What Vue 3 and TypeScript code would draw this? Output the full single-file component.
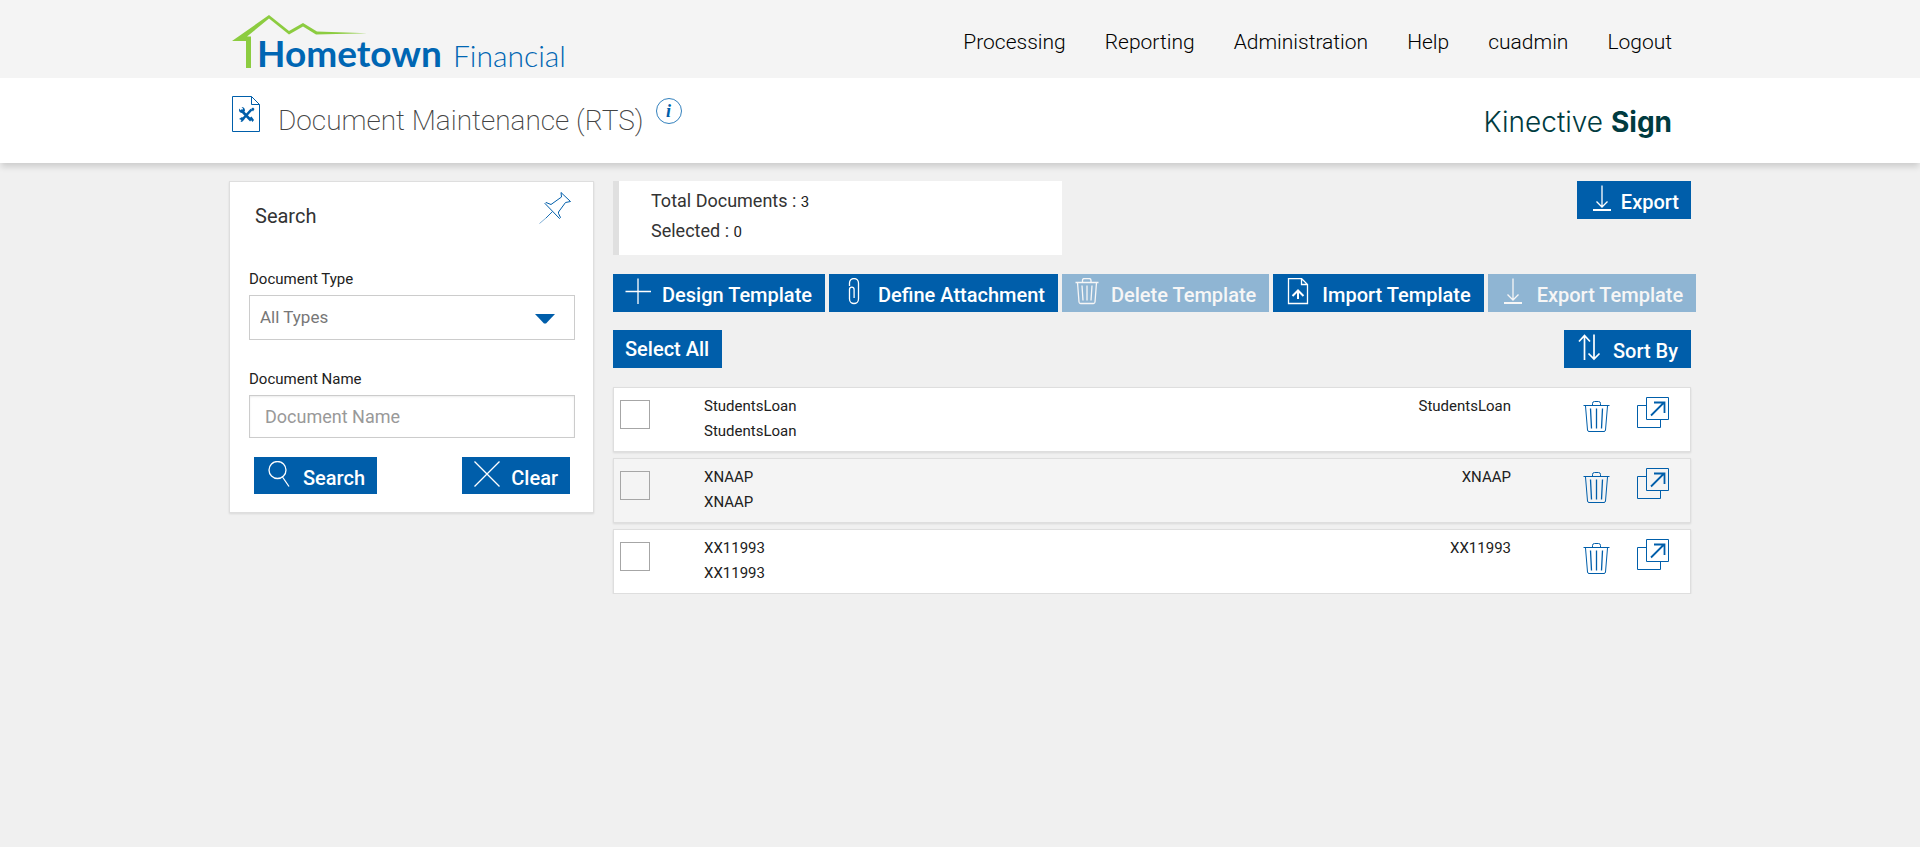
<script setup lang="ts">
import { ref } from 'vue'

interface DocumentRow {
  id: number
  name: string
  description: string
  template: string
}

interface ToolbarAction {
  label: string
  icon: IconName
  disabled: boolean
}

type IconName = 'plus' | 'clip' | 'trash' | 'import' | 'download' | 'sort' | 'search' | 'close'

const icons: Record<IconName, string> = {
  plus: 'M13 0.5V26 M0.5 13.5H26',
  clip: 'M8.500 8V5a4.500 4.500 0 0 1 9 0V21a4.500 4.500 0 0 1-9 0V11.500a2.300 2.300 0 0 1 4.600 0V20',
  trash: 'M1.500 4.500H24.500 M8.500 4V2.500Q8.500 0.500 10.500 0.500H15Q17 0.500 17 2.500V4 M3.500 4.500L5 24Q5.200 25.500 6.500 25.500H19.500Q20.800 25.500 21 24L22.500 4.500 M8 7.500L9 22.500 M13 7.500V22.500 M18 7.500L17 22.500',
  import: 'M3.500 0.500H16.500L22.500 6.500V25.500H3.500Z M16.500 0.500V6.500H22.500',
  download: 'M13 0.500V22 M7.500 16.500L13 22L18.500 16.500',
  sort: 'M8.500 26V1.500 M3 7.500L8.500 1.500L14 7.500 M18 0.500V25 M12.500 19.500L18 25L23.500 19.500',
  search: 'M11.500 17.500A8.500 8.500 0 1 0 11.500 0.500A8.500 8.500 0 0 0 11.500 17.500Z M16.500 16L23 25.500',
  close: 'M0.500 0.500L25.500 25.500 M25.500 0.500L0.500 25.500',
}

const heavyStrokes: Partial<Record<IconName, string>> = {
  import: 'M13 21V13 M7.500 18L13 12.500L18.500 18',
  download: 'M4 25H22',
}

const navigation = ['Processing', 'Reporting', 'Administration', 'Help', 'cuadmin', 'Logout']

const actions: ToolbarAction[] = [
  { label: 'Design Template', icon: 'plus', disabled: false },
  { label: 'Define Attachment', icon: 'clip', disabled: false },
  { label: 'Delete Template', icon: 'trash', disabled: true },
  { label: 'Import Template', icon: 'import', disabled: false },
  { label: 'Export Template', icon: 'download', disabled: true },
]

const documents: DocumentRow[] = [
  { id: 1, name: 'StudentsLoan', description: 'StudentsLoan', template: 'StudentsLoan' },
  { id: 2, name: 'XNAAP', description: 'XNAAP', template: 'XNAAP' },
  { id: 3, name: 'XX11993', description: 'XX11993', template: 'XX11993' },
]

const selected = ref<number[]>([])
const documentType = ref('all')
const documentName = ref('')

function selectAll(): void {
  selected.value = documents.map((row) => row.id)
}

function clearSearch(): void {
  documentType.value = 'all'
  documentName.value = ''
}
</script>

<template>
  <div class="page">
    <header class="site-header">
      <div class="container site-header-inner">
        <a class="logo" href="#" aria-label="Hometown Financial">
          <svg width="350" height="68" viewBox="0 0 350 68">
            <path
              d="M3 33L40 7L60 23L74 15L88 23.500L138 25.200L87 26.500L74 18.500L60 26.500L40 10.500L18 28.500H22V60H17V33Z"
              fill="#8ccc40"
            />
            <text class="logo-strong" x="28" y="59">Hometown</text>
            <text class="logo-light" x="224" y="59">Financial</text>
          </svg>
        </a>
        <nav class="nav">
          <a v-for="item in navigation" :key="item" href="#">{{ item }}</a>
        </nav>
      </div>
    </header>

    <div class="title-bar">
      <div class="container title-inner">
        <svg class="title-icon" width="30" height="38" viewBox="0 0 30 38">
          <path d="M1.500 1.500H20.500L28.500 9.500V36.500H1.500Z M20.500 1.500V9.500H28.500" fill="none" stroke="#005eaa" />
          <path d="M10 15L20 25.500 M20.500 14.500L11 25" stroke="#005eaa" stroke-width="2.600" />
          <path d="M8 13.500L10 15.500L11.500 15L12 13.500L10.500 12Q14 12 14 16L11.500 18Q7.500 18 8 13.500Z M18.500 23L20.500 21.500L23 25L21.500 27Z M20 14L22 12.500L23.500 14L22 16.500Z M8 24L11 22L13.500 24L11 27L9.500 26.500L10.500 25Z" fill="#005eaa" />
        </svg>
        <h1>Document Maintenance (RTS)</h1>
        <button class="info" type="button" aria-label="Information">i</button>
        <span class="product">Kinective <b>Sign</b></span>
      </div>
    </div>

    <main class="container content">
      <form class="panel" @submit.prevent>
        <div class="panel-head">
          <h2>Search</h2>
          <button class="icon-button" type="button" aria-label="Pin search">
            <svg width="32" height="32" viewBox="0 0 32 32" fill="none" stroke="#005eaa">
              <path d="M22 0.500L31.500 9.500L26.500 10.500L19.500 20V21.500L21.500 25.500L20.500 26.500L6 11.500L7 10.500L12 12.500L22.500 5Z" />
              <path d="M13.500 19.500L7 26" stroke-width="0.900" />
              <path d="M7 26L0.500 31.500" stroke-width="0.500" />
            </svg>
          </button>
        </div>

        <label for="doc-type">Document Type</label>
        <div class="select-wrap">
          <select id="doc-type" v-model="documentType">
            <option value="all">All Types</option>
          </select>
          <svg class="caret" width="20" height="10" viewBox="0 0 20 10"><path d="M0 0H20L11 9.500H9Z" fill="#005eaa" /></svg>
        </div>

        <label for="doc-name">Document Name</label>
        <input id="doc-name" v-model="documentName" class="field" type="text" placeholder="Document Name" />

        <div class="panel-actions">
          <button class="btn" type="submit">
            <svg class="glyph" width="26" height="27" viewBox="0 0 26 27"><path :d="icons.search" /></svg>
            <span class="btn-text">Search</span>
          </button>
          <button class="btn" type="button" @click="clearSearch">
            <svg class="glyph" width="26" height="27" viewBox="0 0 26 27"><path :d="icons.close" /></svg>
            <span class="btn-text">Clear</span>
          </button>
        </div>
      </form>

      <section class="results">
        <div class="summary-row">
          <div class="summary">
            <p>Total Documents : <span>{{ documents.length }}</span></p>
            <p>Selected : <span>{{ selected.length }}</span></p>
          </div>
          <button class="btn compact" type="button">
            <svg class="glyph" width="26" height="27" viewBox="0 0 26 27">
              <path :d="icons.download" />
              <path class="heavy" :d="heavyStrokes.download" />
            </svg>
            <span class="btn-text">Export</span>
          </button>
        </div>

        <div class="toolbar">
          <button v-for="action in actions" :key="action.label" class="btn wide" type="button" :disabled="action.disabled">
            <svg class="glyph" width="26" height="27" viewBox="0 0 26 27">
              <path :d="icons[action.icon]" />
              <path v-if="heavyStrokes[action.icon]" class="heavy" :d="heavyStrokes[action.icon]" />
            </svg>
            <span class="btn-text">{{ action.label }}</span>
          </button>
        </div>

        <div class="list-actions">
          <button class="btn wide" type="button" @click="selectAll">Select All</button>
          <button class="btn wide" type="button">
            <svg class="glyph" width="26" height="27" viewBox="0 0 26 27"><path class="medium" :d="icons.sort" /></svg>
            <span class="btn-text">Sort By</span>
          </button>
        </div>

        <ul class="documents">
          <li v-for="row in documents" :key="row.id">
            <input v-model="selected" type="checkbox" :value="row.id" :aria-label="`Select ${row.name}`" />
            <div class="names">
              <span>{{ row.name }}</span>
              <span>{{ row.description }}</span>
            </div>
            <span class="template">{{ row.template }}</span>
            <button class="icon-button trash" type="button" :aria-label="`Delete ${row.name}`">
              <svg width="27" height="32" viewBox="0 0 27 32" fill="none" stroke="#005eaa">
                <path d="M0.500 4.500H26.500 M9.500 4V2.500Q9.500 0.500 11.500 0.500H15.500Q17.500 0.500 17.500 2.500V4 M2.500 5L4.500 29Q4.700 30.500 6 30.500H21Q22.300 30.500 22.500 29L24.500 5" />
                <path d="M7.500 7.500L8.500 27.500 M13.500 7.500V27.500 M19.500 7.500L18.500 27.500" stroke-width="1.300" />
              </svg>
            </button>
            <button class="icon-button open" type="button" :aria-label="`Open ${row.name}`">
              <svg width="32" height="32" viewBox="0 0 32 32" fill="none" stroke="#005eaa">
                <path d="M9.500 0.500H31.500V22.500H9.500Z M9.500 8.500H0.500V30.500H23.500V22.500" />
                <path d="M14 18.500L27 5.500 M17 5.500H27.500V16" stroke-width="1.800" />
              </svg>
            </button>
          </li>
        </ul>
      </section>
    </main>
  </div>
</template>

<style>
body {
  background: #f0f0f0;
}
</style>

<style scoped>
.page {
  font-family: Roboto, 'Open Sans', sans-serif;
  font-size: 15px;
  color: #212121;
}

.page * {
  box-sizing: border-box;
}

.container {
  max-width: 1462px;
  margin: 0 auto;
}

.site-header {
  background: #f4f4f4;
}

.site-header-inner {
  display: flex;
  align-items: center;
  justify-content: space-between;
  height: 78px;
  padding-right: 19px;
}

.logo {
  display: flex;
  padding-top: 6px;
}

.logo-strong {
  font: 700 37px Lato, sans-serif;
  fill: #0066b3;
}

.logo-light {
  font: 300 30px Lato, sans-serif;
  fill: #0066b3;
}

.nav {
  display: flex;
  gap: 39px;
  padding-top: 6px;
}

.nav a {
  font-size: 21px;
  font-weight: 300;
  color: #000;
  text-decoration: none;
}

.title-bar {
  background: #fff;
  box-shadow: 0 5px 6px -1px rgba(0, 0, 0, 0.14);
}

.title-inner {
  display: flex;
  align-items: flex-start;
  height: 85px;
  padding: 17px 19px 0 2px;
}

h1 {
  margin: 10px 12px 0 17px;
  font-size: 28px;
  line-height: 32px;
  font-weight: 200;
  color: #444;
}

.info {
  width: 26px;
  height: 26px;
  margin-top: 3px;
  padding: 0;
  border: 1px solid #3381bd;
  border-radius: 50%;
  background: none;
  color: #005eaa;
  font: italic 700 18px/22px 'Liberation Serif', serif;
}

.product {
  margin: 9px 0 0 auto;
  font-family: Inter, sans-serif;
  font-size: 28px;
  line-height: 36px;
  font-weight: 300;
  color: #003b40;
}

.product b {
  font-weight: 700;
}

.content {
  display: grid;
  grid-template-columns: 365px minmax(0, 1fr);
  align-items: start;
  gap: 19px;
  padding-top: 18px;
}

.panel {
  padding: 0 18px 18px 19px;
  border: 1px solid #dedede;
  background: #fff;
  box-shadow: 0 1px 2px rgba(0, 0, 0, 0.1);
}

.panel-head {
  display: flex;
  justify-content: space-between;
  align-items: flex-start;
  height: 85px;
  padding: 10px 4px 0 6px;
}

h2 {
  margin: 12px 0 0;
  font-size: 20px;
  line-height: 24px;
  font-weight: 400;
  color: #333;
}

.panel label {
  display: block;
  margin-bottom: 4px;
  line-height: 24px;
}

.select-wrap {
  position: relative;
  margin-bottom: 27px;
}

.select-wrap select,
.field {
  display: block;
  width: 100%;
  margin: 0;
  border: 1px solid #ccc;
  border-radius: 0;
  background: #fff;
  font-family: inherit;
}

.select-wrap select {
  height: 45px;
  padding: 0 10px 2px;
  appearance: none;
  color: #777;
  font-size: 17px;
}

.caret {
  position: absolute;
  top: 19px;
  right: 20px;
  pointer-events: none;
}

.field {
  height: 43px;
  padding: 0 15px;
  color: #555;
  font-size: 18px;
  box-shadow: inset 0 1px 2px rgba(0, 0, 0, 0.08);
}

.field::placeholder {
  color: #999;
}

.panel-actions {
  display: flex;
  justify-content: space-between;
  padding: 19px 5px 0;
}

.btn {
  display: inline-flex;
  align-items: center;
  justify-content: center;
  gap: 11px;
  height: 38px;
  padding: 0 12px;
  border: 0;
  background: #005eaa;
  color: #fff;
  font: 500 20px Roboto, sans-serif;
  white-space: nowrap;
}

.btn:disabled {
  opacity: 0.4;
}

.btn.compact {
  gap: 6px;
}

.btn.wide {
  padding-right: 13px;
}

.panel .btn {
  height: 37px;
}

.btn-text {
  padding-top: 4px;
}

.glyph {
  flex: none;
  align-self: flex-start;
  margin-top: 4px;
  fill: none;
  stroke: #fff;
  stroke-width: 1.3;
}

.glyph .medium {
  stroke-width: 1.7;
}

.glyph .heavy {
  stroke-width: 2;
}

.summary-row,
.list-actions {
  display: flex;
  align-items: flex-start;
  justify-content: space-between;
}

.summary {
  width: 449px;
  padding: 5px 0 9px 32px;
  border-left: 6px solid #e0e0e0;
  background: #fff;
  color: #333;
}

.summary p {
  margin: 0;
  font-size: 18px;
  line-height: 30px;
}

.summary span {
  font-size: 15px;
  line-height: 15px;
  color: #212121;
}

.toolbar {
  display: flex;
  gap: 4px;
  margin: 19px -6px 18px 0;
}

.documents {
  display: flex;
  flex-direction: column;
  gap: 6px;
  margin: 19px 0 0;
  padding: 0;
  list-style: none;
}

.documents li {
  display: flex;
  align-items: flex-start;
  height: 65px;
  padding: 0 21px 0 6px;
  border: 1px solid #dedede;
  background: #fff;
  box-shadow: 0 1px 2px rgba(0, 0, 0, 0.1);
}

.documents li:nth-child(even) {
  background: #f4f4f4;
}

.documents input {
  width: 30px;
  height: 29px;
  margin: 12px 54px 0 0;
  border: 1px solid #a6a6a6;
  appearance: none;
}

.documents input:checked {
  background: #005eaa;
}

.names,
.template {
  padding-top: 6px;
  line-height: 25px;
}

.names {
  display: flex;
  flex-direction: column;
}

.template {
  margin-left: auto;
}

.icon-button {
  display: flex;
  padding: 0;
  border: 0;
  background: none;
}

.trash {
  margin: 13px 0 0 72px;
}

.open {
  margin: 9px 0 0 27px;
}
</style>
